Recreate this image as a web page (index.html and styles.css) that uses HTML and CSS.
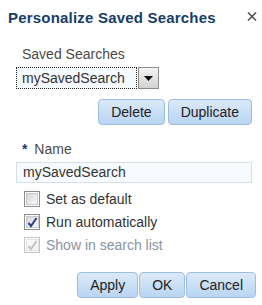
FILE: index.html
```html
<!DOCTYPE html>
<html lang="en">
<head>
    <meta charset="UTF-8">
    <title>Personalize Saved Searches</title>
    <link rel="stylesheet" href="styles.css">
</head>
<body>
    <div class="dialog">
        <div class="dialog-header">
            <h1 class="dialog-title">Personalize Saved Searches</h1>
            <span class="close-btn">
                <svg width="10" height="9" viewBox="0 0 10 9"><path d="M1 0.5l8 8M9 0.5l-8 8" stroke="#5a5a5a" stroke-width="1.7"/></svg>
            </span>
        </div>

        <div class="dialog-body">
            <div class="field-label">Saved Searches</div>
            <div class="choice">
                <span class="choice-value">mySavedSearch</span>
                <span class="choice-arrow">
                    <svg width="9" height="5" viewBox="0 0 9 5"><path d="M0 0h9L4.5 5z" fill="#111"/></svg>
                </span>
            </div>

            <div class="button-row">
                <button class="btn">Delete</button>
                <button class="btn">Duplicate</button>
            </div>

            <div class="field-label name-label"><span class="required">*</span> Name</div>
            <div class="text-input">mySavedSearch</div>

            <div class="check-list">
                <div class="check-row">
                    <span class="check-box"><span class="check-inner"></span></span>
                    <span>Set as default</span>
                </div>
                <div class="check-row">
                    <span class="check-box"><span class="check-inner">
                        <svg width="11" height="11" viewBox="0 0 11 11"><path d="M1.5 6l2.5 3L9.5 1" fill="none" stroke="#2b3f8e" stroke-width="2"/></svg>
                    </span></span>
                    <span>Run automatically</span>
                </div>
                <div class="check-row disabled">
                    <span class="check-box"><span class="check-inner">
                        <svg width="11" height="11" viewBox="0 0 11 11"><path d="M1.5 6l2.5 3L9.5 1" fill="none" stroke="#c2c2c2" stroke-width="2"/></svg>
                    </span></span>
                    <span>Show in search list</span>
                </div>
            </div>
        </div>

        <div class="dialog-footer">
            <button class="btn">Apply</button>
            <button class="btn">OK</button>
            <button class="btn">Cancel</button>
        </div>
    </div>
</body>
</html>
```

FILE: styles.css
```css
body {
    margin: 0;
    background-color: #fff;
    font-family: 'Liberation Sans', Arial, sans-serif;
    font-size: 14px;
    color: #4a4a4a;
}
.dialog {
    width: 262px;
    height: 305px;
    box-sizing: border-box;
}
.dialog-header {
    display: flex;
    justify-content: space-between;
    align-items: flex-start;
    padding: 9px 5px 0 8px;
    height: 45px;
    box-sizing: border-box;
}
.dialog-title {
    margin: 0;
    font-size: 15px;
    line-height: 18px;
    font-weight: bold;
    color: #173d69;
    letter-spacing: 0.2px;
}
.close-btn {
    display: flex;
    margin-top: 3px;
}
.dialog-body {
    padding: 0 10px 0 16px;
}
.field-label {
    padding-left: 6px;
    line-height: 18px;
    height: 22px;
}
.choice {
    display: flex;
    width: 143px;
    height: 22px;
}
.choice-value {
    flex-grow: 1;
    border: 1px dotted #222;
    background-color: #f5faff;
    padding-left: 5px;
    line-height: 20px;
    font-size: 14px;
    color: #333;
}
.choice-arrow {
    width: 21px;
    margin-left: 1px;
    display: flex;
    align-items: center;
    justify-content: center;
    border: 1px solid #8c8c8c;
    box-sizing: border-box;
    background: linear-gradient(#f4f4f4, #d2d2d2);
}
.button-row {
    display: flex;
    justify-content: flex-end;
    gap: 3px;
    margin-top: 10px;
}
.btn {
    font-family: 'Liberation Sans', Arial, sans-serif;
    font-size: 14px;
    color: #222;
    height: 26px;
    padding: 0 12px;
    border: 1px solid #9dbde0;
    border-radius: 4px;
    background: linear-gradient(#dbe9f8, #b9d5f3);
}
.name-label {
    margin-top: 15px;
}
.required {
    color: #1a3f6d;
    font-weight: bold;
    margin-right: 3px;
}
.text-input {
    height: 21px;
    box-sizing: border-box;
    border: 1px solid #d8dfe7;
    background-color: #f7fbff;
    padding-left: 6px;
    line-height: 19px;
    color: #333;
}
.check-list {
    padding: 8px 0 0 8px;
    display: flex;
    flex-direction: column;
    gap: 7px;
}
.check-row {
    display: flex;
    align-items: center;
    gap: 6px;
    height: 16px;
    color: #333;
}
.check-box {
    width: 16px;
    height: 16px;
    box-sizing: border-box;
    border: 1px solid #8e8e8e;
    padding: 1px;
    background-color: #fff;
    display: flex;
}
.check-inner {
    flex-grow: 1;
    border: 1px solid #c8c8c8;
    background: linear-gradient(135deg, #d6d6d6, #fafafa);
    display: flex;
    align-items: center;
    justify-content: center;
}
.check-row.disabled {
    color: #8a94a3;
}
.check-row.disabled .check-box {
    border-color: #c4c4c4;
}
.check-row.disabled .check-inner {
    border-color: #e2e2e2;
    background: #f6f6f6;
}
.dialog-footer {
    display: flex;
    justify-content: flex-end;
    gap: 1px;
    padding: 19px 6px 0 0;
}
```
